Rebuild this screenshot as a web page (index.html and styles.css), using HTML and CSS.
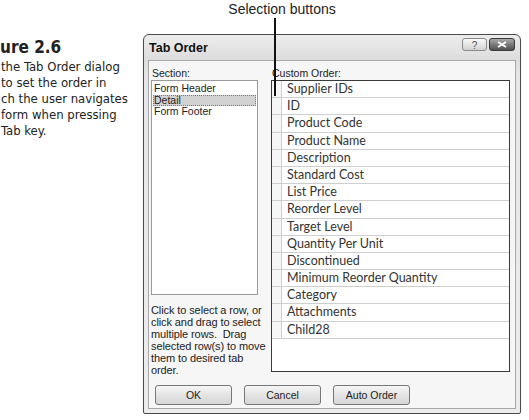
FILE: index.html
```html
<!DOCTYPE html>
<html>
<head>
<meta charset="utf-8">
<link rel="stylesheet" href="styles.css">
</head>
<body>
<div class="page">
  <div class="callout">
    <div class="callout-label">Selection buttons</div>
    <div class="callout-line"></div>
  </div>
  <div class="caption">
    <div class="cap-title">ure 2.6</div>
    <div class="cap-line">the Tab Order dialog</div>
    <div class="cap-line">to set the order in</div>
    <div class="cap-line">ch the user navigates</div>
    <div class="cap-line">form when pressing</div>
    <div class="cap-line">Tab key.</div>
  </div>
  <div class="dialog">
    <div class="titlebar">
      <div class="title">Tab Order</div>
      <svg class="tb-buttons" width="54" height="14" viewBox="0 0 54 14">
        <defs>
          <linearGradient id="gh" x1="0" y1="0" x2="0" y2="1">
            <stop offset="0" stop-color="#fafafa"/>
            <stop offset="0.5" stop-color="#e6e6e6"/>
            <stop offset="1" stop-color="#cfcfcf"/>
          </linearGradient>
          <linearGradient id="gc" x1="0" y1="0" x2="0" y2="1">
            <stop offset="0" stop-color="#b0b0b0"/>
            <stop offset="0.5" stop-color="#7a7a7a"/>
            <stop offset="1" stop-color="#4e4e4e"/>
          </linearGradient>
        </defs>
        <rect x="0.5" y="0.5" width="24" height="12" rx="2.5" fill="url(#gh)" stroke="#8a8a8a"/>
        <text x="12.5" y="10.5" text-anchor="middle" font-family="Liberation Sans, sans-serif" font-size="10" fill="#555">?</text>
        <rect x="27.5" y="0.5" width="25" height="12" rx="2.5" fill="url(#gc)" stroke="#3a3a3a"/>
        <path d="M36 4 L44 9 M44 4 L36 9" stroke="#fff" stroke-width="2" fill="none"/>
      </svg>
    </div>
    <div class="client">
      <div class="columns">
        <div class="left-col">
          <div class="label">Section:</div>
          <div class="listbox">
            <div class="item">Form Header</div>
            <div class="item selected">Detail</div>
            <div class="item">Form Footer</div>
          </div>
          <div class="help">Click to select a row, or<br>click and drag to select<br>multiple rows.&nbsp; Drag<br>selected row(s) to move<br>them to desired tab<br>order.</div>
        </div>
        <div class="right-col">
          <div class="label">Custom Order:</div>
          <div class="grid">
            <div class="row"><div class="sel"></div><div class="cell">Supplier IDs</div></div>
            <div class="row"><div class="sel"></div><div class="cell">ID</div></div>
            <div class="row"><div class="sel"></div><div class="cell">Product Code</div></div>
            <div class="row"><div class="sel"></div><div class="cell">Product Name</div></div>
            <div class="row"><div class="sel"></div><div class="cell">Description</div></div>
            <div class="row"><div class="sel"></div><div class="cell">Standard Cost</div></div>
            <div class="row"><div class="sel"></div><div class="cell">List Price</div></div>
            <div class="row"><div class="sel"></div><div class="cell">Reorder Level</div></div>
            <div class="row"><div class="sel"></div><div class="cell">Target Level</div></div>
            <div class="row"><div class="sel"></div><div class="cell">Quantity Per Unit</div></div>
            <div class="row"><div class="sel"></div><div class="cell">Discontinued</div></div>
            <div class="row"><div class="sel"></div><div class="cell">Minimum Reorder Quantity</div></div>
            <div class="row"><div class="sel"></div><div class="cell">Category</div></div>
            <div class="row"><div class="sel"></div><div class="cell">Attachments</div></div>
            <div class="row"><div class="sel"></div><div class="cell">Child28</div></div>
          </div>
        </div>
      </div>
      <div class="buttons">
        <div class="btn">OK</div>
        <div class="btn">Cancel</div>
        <div class="btn">Auto Order</div>
      </div>
    </div>
  </div>
</div>
</body>
</html>
```

FILE: styles.css
```css
html, body {
  margin: 0;
  padding: 0;
  background: #fff;
}
.page {
  position: relative;
  width: 529px;
  height: 420px;
  overflow: hidden;
  display: flex;
  align-items: flex-start;
}
.callout {
  position: absolute;
  left: 224px;
  top: 0;
  width: 116px;
  z-index: 5;
}
.callout-label {
  font-family: "Liberation Sans", Arial, sans-serif;
  font-size: 14px;
  color: #222;
  text-align: center;
  line-height: 15px;
  margin-top: 2px;
}
.callout-line {
  width: 2px;
  height: 78px;
  background: #111;
  margin-left: 50px;
  margin-top: 1px;
}
.caption {
  width: 143px;
  flex: none;
  padding-top: 38px;
  font-family: "Liberation Sans Narrow", "DejaVu Sans Condensed", sans-serif;
  color: #222;
  font-size: 13px;
  line-height: 16px;
}
.cap-title {
  font-weight: bold;
  font-size: 17px;
  line-height: 18px;
  margin-bottom: 3px;
}
.cap-line {
  padding-left: 1px;
  white-space: nowrap;
}
.dialog {
  margin-top: 34px;
  width: 378px;
  height: 380px;
  box-sizing: border-box;
  border: 1px solid #4a4a4a;
  border-radius: 6px 6px 2px 2px;
  background: linear-gradient(#ececec, #dcdcdc 26px, #e6e6e6 40px, #ececec);
  padding: 0 4px 4px 4px;
  display: flex;
  flex-direction: column;
  overflow: hidden;
}
.titlebar {
  height: 25px;
  display: flex;
  align-items: flex-start;
  justify-content: space-between;
  flex: none;
}
.title {
  font-family: "Liberation Sans", Arial, sans-serif;
  font-weight: bold;
  font-size: 12.5px;
  line-height: 14px;
  color: #111;
  padding-left: 1px;
  padding-top: 6px;
}
.tb-buttons {
  display: block;
  flex: none;
  margin-top: 3px;
}
.client {
  flex: 1;
  background: #f6f6f6;
  border: 1px solid #a8a8a8;
  display: flex;
  flex-direction: column;
  padding: 6px 5px 0 2px;
  font-family: "Liberation Sans", Arial, sans-serif;
  font-size: 10.5px;
  color: #222;
}
.columns {
  display: flex;
  gap: 13px;
}
.left-col {
  width: 107px;
  flex: none;
}
.right-col {
  flex: 1;
}
.label {
  line-height: 12px;
  margin-bottom: 1px;
  padding-left: 1px;
}
.listbox {
  height: 209px;
  background: #fff;
  border: 1px solid #9a9a9a;
  padding: 2px 1px;
}
.item {
  line-height: 11.5px;
  padding-left: 1px;
}
.item.selected {
  background: #d2d2d2;
  outline: 1px dotted #777;
  outline-offset: -1px;
}
.help {
  margin-top: 9px;
  line-height: 12px;
  font-size: 11px;
  white-space: nowrap;
  letter-spacing: -0.1px;
}
.grid {
  height: 290px;
  background: #fff;
  border: 1px solid #3a3a3a;
  font-family: Lato, "Open Sans", sans-serif;
  font-size: 12.5px;
  color: #333;
}
.row {
  display: flex;
  height: 17.2px;
  border-bottom: 1px solid #cfcfcf;
  box-sizing: border-box;
}
.sel {
  width: 9px;
  flex: none;
  border-right: 1px solid #cfcfcf;
  background: #f6f6f6;
}
.cell {
  padding-left: 5px;
  line-height: 16px;
}
.buttons {
  display: flex;
  gap: 12px;
  margin-top: 9px;
  padding-left: 4px;
}
.btn {
  width: 75px;
  height: 18px;
  border: 1px solid #777;
  border-radius: 3px;
  background: linear-gradient(#f6f6f6, #e4e4e4 50%, #d6d6d6);
  display: flex;
  align-items: center;
  justify-content: center;
  font-size: 10.5px;
}
```
